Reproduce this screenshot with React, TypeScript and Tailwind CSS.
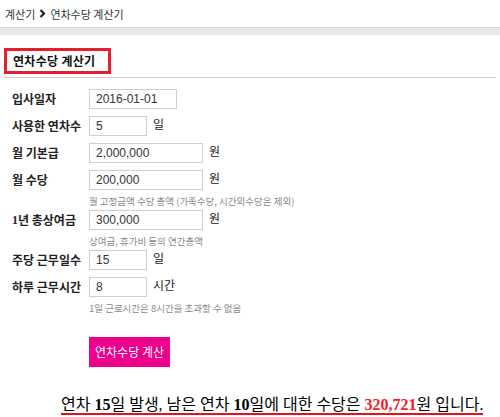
import React from "react";

const sans = "font-['Noto_Sans_CJK_KR','Liberation_Sans',sans-serif]";

const Row = ({
  label,
  value,
  width,
  unit,
  help,
}: {
  label: React.ReactNode;
  value: string;
  width: string;
  unit?: string;
  help?: string;
}) => (
  <div className={help ? "mb-[3px]" : "mb-[7px]"}>
    <div className="flex items-start">
      <div className="w-[77px] h-[20px] flex items-center text-[12px] leading-[20px] font-bold text-[#222]">
        {label}
      </div>
      <div
        className={`${width} h-[20px] border border-[#cfcfcf] bg-white flex items-center pl-[6px] text-[12px] leading-[18px] text-[#333] font-['Liberation_Sans',sans-serif]`}
      >
        {value}
      </div>
      {unit && (
        <span className="ml-[6px] mt-[1px] text-[12px] leading-[13px] text-[#222]">{unit}</span>
      )}
    </div>
    {help && (
      <div className="ml-[77px] mt-[5px] text-[9.5px] leading-[12px] text-[#8a8a8a]">{help}</div>
    )}
  </div>
);

const App = () => {
  return (
    <div className={`w-[500px] h-[417px] bg-white overflow-hidden ${sans}`}>
      <div className="h-[27px] px-[5px] flex items-center gap-[3px] text-[11px] leading-[14px] text-[#333]">
        <span>계산기</span>
        <svg width="7" height="9" viewBox="0 0 7 9" className="mx-[1px]">
          <polyline points="1.5,1 5,4.5 1.5,8" fill="none" stroke="#222" strokeWidth="2.2" />
        </svg>
        <span>연차수당 계산기</span>
      </div>
      <div className="h-[8px] bg-[#e8e8e8] border-t border-[#d6d6d6]" />

      <div className="px-[4px] pt-[13px]">
        <div className="border-b border-[#cfcfcf] pb-[3px]">
          <div className="w-[107px] h-[26px] border-[3px] border-[#e4202a] flex items-center pl-[6px] text-[12px] leading-[16px] font-bold tracking-[0.3px] text-[#111]">
            연차수당 계산기
          </div>
        </div>
      </div>

      <div className="pl-[12px] pt-[11px]">
        <Row label="입사일자" value="2016-01-01" width="w-[88px]" />
        <Row label="사용한 연차수" value="5" width="w-[58px]" unit="일" />
        <Row label="월 기본급" value="2,000,000" width="w-[114px]" unit="원" />
        <Row
          label="월 수당"
          value="200,000"
          width="w-[114px]"
          unit="원"
          help="월 고정금액 수당 총액 (가족수당, 시간외수당은 제외)"
        />
        <Row
          label={
            <>
              <span className="font-['Liberation_Serif',serif]">1</span>년 총상여금
            </>
          }
          value="300,000"
          width="w-[114px]"
          unit="원"
          help="상여금, 휴가비 등의 연간총액"
        />
        <Row label="주당 근무일수" value="15" width="w-[58px]" unit="일" />
        <Row
          label="하루 근무시간"
          value="8"
          width="w-[58px]"
          unit="시간"
          help="1일 근로시간은 8시간을 초과할 수 없음"
        />
      </div>

      <div className="pl-[89px] pt-[20px]">
        <button className="w-[81px] h-[30px] bg-[#ec008c] text-white text-[12px] leading-[16px]">
          연차수당 계산
        </button>
      </div>

      <div className="pl-[61px] pt-[28px] font-['Liberation_Serif','Noto_Sans_CJK_KR',serif] text-[16px] leading-[19px] text-black">
        <span className="border-b-2 border-[#e8101a]">
          연차 <b>15</b>일 발생, 남은 연차 <b>10</b>일에 대한 수당은{" "}
          <b className="text-[#f01c24]">320,721</b>원 입니다.
        </span>
      </div>
    </div>
  );
};

export default App;
